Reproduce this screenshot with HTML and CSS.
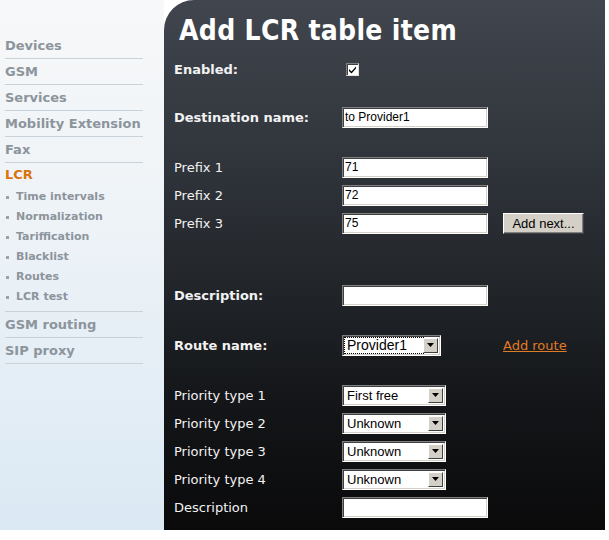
FILE: index.html
```html
<!DOCTYPE html>
<html>
<head lang="en">
    <meta charset="UTF-8">
    <title>Add LCR table item</title>
    <link rel="stylesheet" href="styles.css">
</head>
<body>
<div class="page">
    <div class="side">
        <ul class="menu">
            <li><a href="#">Devices</a></li>
            <li><a href="#">GSM</a></li>
            <li><a href="#">Services</a></li>
            <li><a href="#">Mobility Extension</a></li>
            <li><a href="#">Fax</a></li>
            <li class="open">
                <a href="#" class="current">LCR</a>
                <ul class="sub">
                    <li><a href="#">Time intervals</a></li>
                    <li><a href="#">Normalization</a></li>
                    <li><a href="#">Tariffication</a></li>
                    <li><a href="#">Blacklist</a></li>
                    <li><a href="#">Routes</a></li>
                    <li><a href="#">LCR test</a></li>
                </ul>
            </li>
            <li><a href="#">GSM routing</a></li>
            <li><a href="#">SIP proxy</a></li>
        </ul>
    </div>

    <div class="main">
        <h1>Add LCR table item</h1>

        <div class="row">
            <label class="b">Enabled:</label>
            <div class="field"><span class="chk"><svg width="9" height="9" viewBox="0 0 9 9"><path d="M1 4 L3.5 6.5 L8 1.5 L8 3.5 L3.5 8.5 L1 6 Z" fill="#000"/></svg></span></div>
        </div>

        <div class="row sp20">
            <label class="b">Destination name:</label>
            <div class="field"><input class="txt" type="text" value="to Provider1"></div>
        </div>

        <div class="row sp22">
            <label>Prefix 1</label>
            <div class="field"><input class="txt" type="text" value="71"></div>
        </div>
        <div class="row">
            <label>Prefix 2</label>
            <div class="field"><input class="txt" type="text" value="72"></div>
        </div>
        <div class="row">
            <label>Prefix 3</label>
            <div class="field">
                <input class="txt" type="text" value="75">
                <button class="btn" type="button">Add next...</button>
            </div>
        </div>

        <div class="row sp44">
            <label class="b">Description:</label>
            <div class="field"><input class="txt" type="text" value=""></div>
        </div>

        <div class="row sp22">
            <label class="b">Route name:</label>
            <div class="field">
                <div class="sel route">
                    <span class="val focus">Provider1</span>
                    <span class="arrow"><svg width="7" height="4" viewBox="0 0 7 4"><path d="M0 0 H7 L3.5 4 Z" fill="#000"/></svg></span>
                </div>
                <a href="#" class="link">Add route</a>
            </div>
        </div>

        <div class="row sp22">
            <label>Priority type 1</label>
            <div class="field">
                <div class="sel prio">
                    <span class="val">First free</span>
                    <span class="arrow"><svg width="7" height="4" viewBox="0 0 7 4"><path d="M0 0 H7 L3.5 4 Z" fill="#000"/></svg></span>
                </div>
            </div>
        </div>
        <div class="row">
            <label>Priority type 2</label>
            <div class="field">
                <div class="sel prio">
                    <span class="val">Unknown</span>
                    <span class="arrow"><svg width="7" height="4" viewBox="0 0 7 4"><path d="M0 0 H7 L3.5 4 Z" fill="#000"/></svg></span>
                </div>
            </div>
        </div>
        <div class="row">
            <label>Priority type 3</label>
            <div class="field">
                <div class="sel prio">
                    <span class="val">Unknown</span>
                    <span class="arrow"><svg width="7" height="4" viewBox="0 0 7 4"><path d="M0 0 H7 L3.5 4 Z" fill="#000"/></svg></span>
                </div>
            </div>
        </div>
        <div class="row">
            <label>Priority type 4</label>
            <div class="field">
                <div class="sel prio">
                    <span class="val">Unknown</span>
                    <span class="arrow"><svg width="7" height="4" viewBox="0 0 7 4"><path d="M0 0 H7 L3.5 4 Z" fill="#000"/></svg></span>
                </div>
            </div>
        </div>
        <div class="row">
            <label>Description</label>
            <div class="field"><input class="txt" type="text" value=""></div>
        </div>
    </div>
</div>
</body>
</html>
```

FILE: styles.css
```css
body, ul, li, h1 {
    margin: 0;
    padding: 0;
    list-style: none;
}
body {
    background: #fff;
    font-family: "DejaVu Sans", Verdana, sans-serif;
}
.page {
    display: flex;
    width: 605px;
    height: 530px;
}

/* left menu */
.side {
    width: 164px;
    flex-shrink: 0;
    background: linear-gradient(to bottom, #f7f8f9 0%, #eef3f7 40%, #dbe9f4 100%);
}
.menu {
    padding: 33px 0 0 5px;
}
.menu a {
    color: #8c949c;
    text-decoration: none;
}
.menu > li {
    width: 138px;
    font-size: 13px;
    font-weight: bold;
    line-height: 25px;
    border-bottom: 1px solid #c8d2da;
}
.menu > li.open {
    line-height: 24px;
    border-bottom: 0;
}
.menu a.current {
    color: #d8740e;
}
.sub {
    padding-bottom: 4px;
    border-bottom: 1px solid #c8d2da;
}
.sub li {
    display: flex;
    align-items: center;
    gap: 7px;
    font-size: 11px;
    line-height: 20px;
    padding-left: 1px;
}
.sub li:before {
    content: "";
    width: 3px;
    height: 3px;
    background: #9aa1a8;
}

/* main panel */
.main {
    width: 441px;
    height: 530px;
    padding-left: 10px;
    box-sizing: border-box;
    border-top-left-radius: 30px;
    background: linear-gradient(to bottom, #41464e 0%, #33383f 25%, #24282d 50%, #141619 75%, #0a0a0b 100%);
    color: #f2f2f2;
}
.main h1 {
    font-family: "DejaVu Sans Condensed", "DejaVu Sans", sans-serif;
    font-stretch: condensed;
    font-size: 28px;
    letter-spacing: 0.3px;
    line-height: 32px;
    font-weight: bold;
    color: #fff;
    padding: 15px 0 0 5px;
    margin-bottom: 8px;
}
.row {
    display: grid;
    grid-template-columns: 168px auto;
    align-items: center;
    height: 28px;
}
.sp20 { margin-top: 20px; }
.sp22 { margin-top: 22px; }
.sp44 { margin-top: 44px; }
.row label {
    font-size: 13px;
}
.row label.b {
    font-weight: bold;
}
.field {
    display: flex;
    align-items: center;
}

.txt {
    width: 146px;
    height: 21px;
    box-sizing: border-box;
    margin: 0;
    padding: 0 2px;
    border: 1px solid;
    border-color: #808080 #fff #fff #808080;
    box-shadow: inset 1px 1px 0 #404040, inset -1px -1px 0 #d4d0c8;
    background: #fff;
    font-family: "Liberation Sans", Arial, sans-serif;
    font-size: 12px;
    color: #000;
}
.chk {
    display: flex;
    align-items: center;
    justify-content: center;
    width: 13px;
    height: 13px;
    box-sizing: border-box;
    margin-left: 4px;
    background: #fff;
    border: 1px solid;
    border-color: #808080 #e0e0e0 #e0e0e0 #808080;
    box-shadow: inset 1px 1px 0 #404040;
}
.btn {
    width: 81px;
    height: 21px;
    margin-left: 15px;
    padding: 0;
    background: #d4d0c8;
    border: 1px solid;
    border-color: #fff #404040 #404040 #fff;
    box-shadow: inset -1px -1px 0 #808080;
    font-family: "Liberation Sans", Arial, sans-serif;
    font-size: 13px;
    color: #000;
}

.sel {
    display: flex;
    height: 21px;
    box-sizing: border-box;
    padding: 2px;
    background: #fff;
    border: 1px solid;
    border-color: #808080 #fff #fff #808080;
    box-shadow: inset 1px 1px 0 #404040, inset -1px -1px 0 #d4d0c8;
    font-family: "Liberation Sans", Arial, sans-serif;
    color: #000;
}
.sel.route { width: 99px; }
.sel.prio { width: 104px; }
.sel .val {
    flex: 1;
    padding-left: 2px;
    font-size: 13px;
    line-height: 15px;
}
.sel.route .val {
    font-size: 14px;
}
.sel .val.focus {
    outline: 1px dotted #000;
}
.sel .arrow {
    display: flex;
    align-items: center;
    justify-content: center;
    width: 15px;
    box-sizing: border-box;
    background: #d4d0c8;
    border: 1px solid;
    border-color: #fff #404040 #404040 #fff;
}
.link {
    margin-left: 62px;
    font-size: 13px;
    color: #e07b26;
}
```
